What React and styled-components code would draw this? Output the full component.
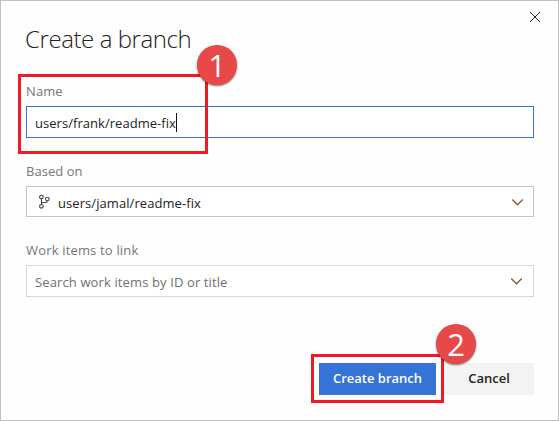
import React from "react";
import styled, { createGlobalStyle } from "styled-components";

const GlobalStyle = createGlobalStyle`
  * { box-sizing: border-box; }
  body { margin: 0; background: #fff; font-family: "Open Sans", "Noto Sans", sans-serif; }
`;

const Dialog = styled.main`
  position: relative;
  display: flex;
  flex-direction: column;
  width: 559px;
  height: 421px;
  padding: 20px 24px 25px 25px;
  border: 1px solid #c0c0c0;
  background: #fefefe;
  color: #222;
  font-size: 13px;
`;

const Title = styled.h1`
  height: 36px;
  margin: 0 0 25px -1px;
  font-size: 24px;
  font-weight: 300;
  line-height: 36px;
  letter-spacing: ${(p) => p.$spacing}px;
  white-space: nowrap;
`;

const CloseButton = styled.button`
  position: absolute;
  top: 10px;
  right: 17px;
  display: flex;
  padding: 0;
  border: 0;
  background: none;
`;

const Field = styled.section`
  display: flex;
  flex-direction: column;
  height: ${(p) => p.$height}px;
`;

const Label = styled.label`
  height: ${(p) => p.$height}px;
  color: #767676;
  line-height: 18px;
  letter-spacing: ${(p) => p.$spacing}px;
  white-space: nowrap;
`;

const Control = styled.div`
  display: flex;
  align-items: center;
  height: ${(p) => p.$height}px;
  padding: 0 ${(p) => p.$right || 9}px 0 ${(p) => p.$left || 8}px;
  border: 1px solid ${(p) => p.$border};
  background: #fff;
`;

const Value = styled.span`
  padding-top: 2px;
  color: ${(p) => (p.$muted ? "#707070" : "#222")};
  line-height: 20px;
  letter-spacing: ${(p) => p.$spacing}px;
  white-space: nowrap;
`;

const Caret = styled.span`
  width: 1px;
  height: 19px;
  margin-top: 1px;
  background: #111;
`;

const BranchSvg = styled.svg`
  flex: none;
  margin-right: 7px;
`;

const ChevronSvg = styled.svg`
  flex: none;
  margin-left: auto;
`;

const Actions = styled.footer`
  display: flex;
  justify-content: flex-end;
  gap: 8px;
  margin-top: auto;
`;

const Button = styled.button`
  width: ${(p) => p.$width}px;
  height: 32px;
  padding: 0 0 2px;
  border: 0;
  background: ${(p) => (p.$primary ? "#3573d6" : "#f3f3f3")};
  color: ${(p) => (p.$primary ? "#fff" : "#222")};
  font: 600 13px "Open Sans", "Noto Sans", sans-serif;
  letter-spacing: ${(p) => p.$spacing}px;
  white-space: nowrap;
`;

const Highlight = styled.div`
  position: absolute;
  left: ${(p) => p.$x}px;
  top: ${(p) => p.$y}px;
  width: ${(p) => p.$w}px;
  height: ${(p) => p.$h}px;
  border: 3px solid #ed1c24;
  pointer-events: none;
`;

const StepBadge = styled.div`
  position: absolute;
  left: ${(p) => p.$x}px;
  top: ${(p) => p.$y}px;
  display: flex;
  align-items: center;
  justify-content: center;
  width: 40px;
  height: 40px;
  border-radius: 50%;
  background: #e84848;
  box-shadow: 0 1px 2px rgba(0, 0, 0, 0.55);
  color: #fff;
  font-size: 31px;
  line-height: 38px;
  padding-bottom: 1px;
`;

const Chevron = () => (
  <ChevronSvg width="14" height="8" viewBox="0 0 14 8" fill="none" stroke="#86583a" strokeWidth="1.3">
    <path d="M2.2 1.5l5.3 5.3 5.3-5.3" />
  </ChevronSvg>
);

const Branch = () => (
  <BranchSvg width="13" height="15" viewBox="0 0 13 15" fill="none" stroke="#444" strokeWidth="1.1">
    <circle cx="3.4" cy="3" r="1.8" />
    <circle cx="9.3" cy="5" r="1.8" />
    <circle cx="3.4" cy="12.3" r="1.8" />
    <path d="M3.5 4.8v5.7M9.3 6.8v.3q0 1.4-1.5 1.4H3.5" />
  </BranchSvg>
);

export default function App() {
  return (
    <>
      <GlobalStyle />
      <Dialog>
        <CloseButton aria-label="Close">
          <svg width="12" height="12" viewBox="0 0 12 12" stroke="#222" strokeWidth="1">
            <path d="M1 1l10 10M11 1L1 11" />
          </svg>
        </CloseButton>
        <Title $spacing={-0.42}>Create a branch</Title>
        <Field $height={80}>
          <Label $height={24} $spacing={0.1}>Name</Label>
          <Control $height={32} $border="#3573d0">
            <Value $spacing={0.04}>users/frank/readme-fix</Value>
            <Caret />
          </Control>
        </Field>
        <Field $height={79}>
          <Label $height={24} $spacing={0.05}>Based on</Label>
          <Control $height={31} $border="#c4c4c4" $left={11}>
            <Branch />
            <Value $spacing={0.07}>users/jamal/readme-fix</Value>
            <Chevron />
          </Control>
        </Field>
        <Field $height={56}>
          <Label $height={24} $spacing={0.17}>Work items to link</Label>
          <Control $height={32} $border="#d8d8d8" $right={10}>
            <Value $muted $spacing={0.12}>Search work items by ID or title</Value>
            <Chevron />
          </Control>
        </Field>
        <Actions>
          <Button $primary $width={117} $spacing={0}>Create branch</Button>
          <Button $width={90} $spacing={0}>Cancel</Button>
        </Actions>
        <Highlight $x={17} $y={73} $w={190} $h={80} />
        <Highlight $x={310} $y={353} $w={133} $h={49} />
        <StepBadge $x={196} $y={44}>1</StepBadge>
        <StepBadge $x={435} $y={323}>2</StepBadge>
      </Dialog>
    </>
  );
}
